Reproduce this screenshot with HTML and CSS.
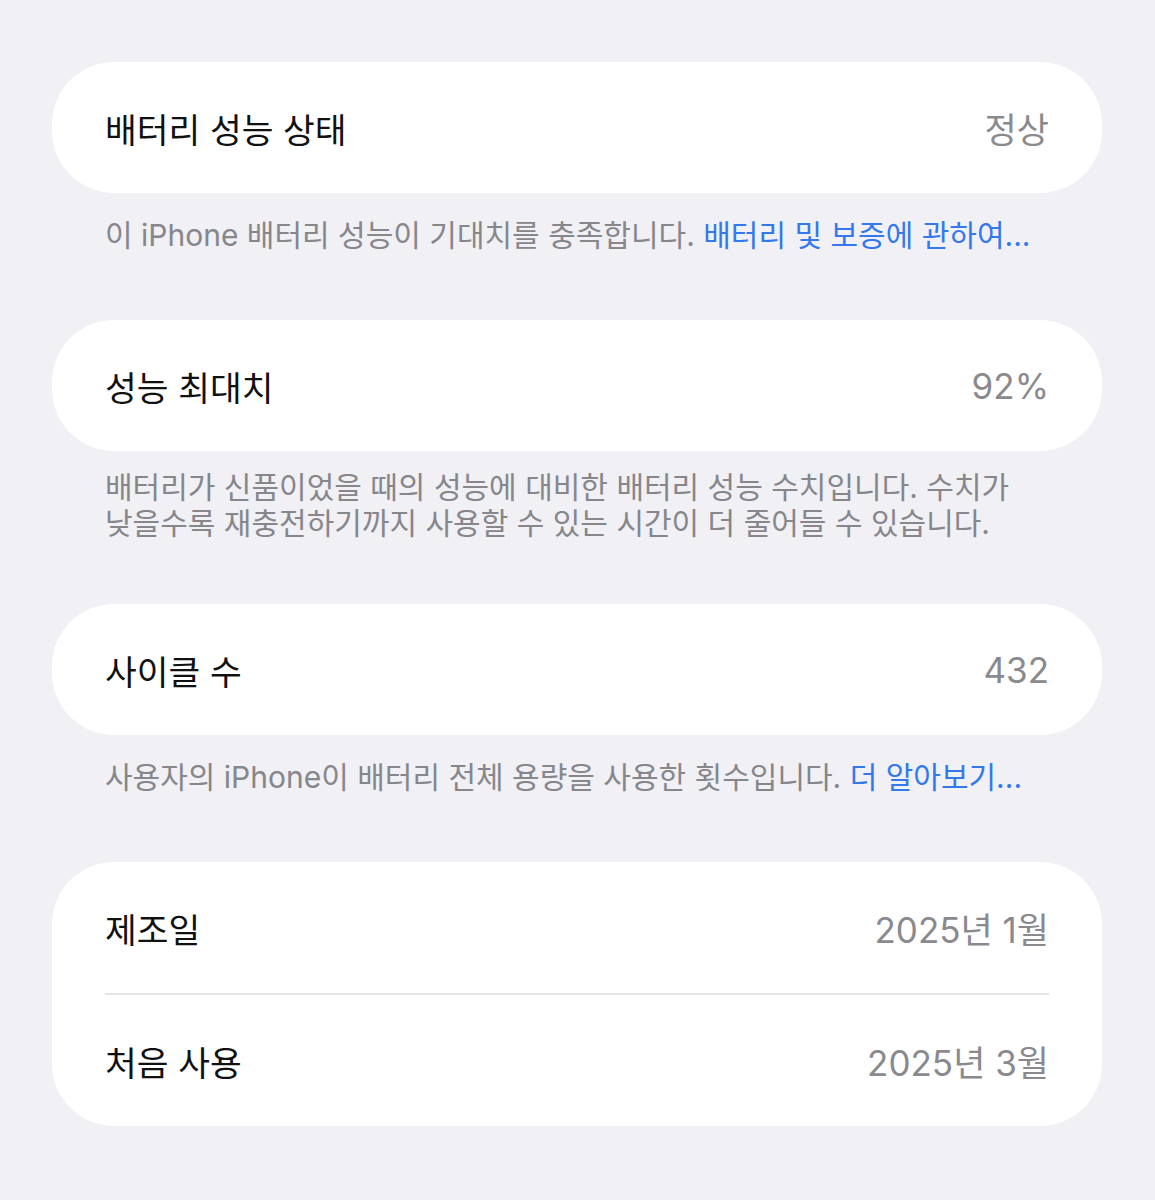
FILE: index.html
```html
<!DOCTYPE html>
<html lang="ko">
<head>
    <meta charset="UTF-8">
    <meta name="viewport" content="width=device-width, initial-scale=1.0">
    <title>배터리 성능 상태</title>
    <link rel="stylesheet" href="styles.css">
</head>
<body>
    <div class="settings">
        <div class="group">
            <div class="row">
                <span class="label">배터리 성능 상태</span>
                <span class="value">정상</span>
            </div>
        </div>
        <div class="footnote">이 iPhone 배터리 성능이 기대치를 충족합니다. <a class="link" href="#">배터리 및 보증에 관하여...</a></div>

        <div class="group">
            <div class="row">
                <span class="label">성능 최대치</span>
                <span class="value">92%</span>
            </div>
        </div>
        <div class="footnote multi">배터리가 신품이었을 때의 성능에 대비한 배터리 성능 수치입니다. 수치가 낮을수록 재충전하기까지 사용할 수 있는 시간이 더 줄어들 수 있습니다.</div>

        <div class="group">
            <div class="row">
                <span class="label">사이클 수</span>
                <span class="value">432</span>
            </div>
        </div>
        <div class="footnote">사용자의 iPhone이 배터리 전체 용량을 사용한 횟수입니다. <a class="link" href="#">더 알아보기...</a></div>

        <div class="group">
            <div class="row">
                <span class="label">제조일</span>
                <span class="value">2025년 1월</span>
            </div>
            <div class="divider"></div>
            <div class="row">
                <span class="label">처음 사용</span>
                <span class="value">2025년 3월</span>
            </div>
        </div>
    </div>
</body>
</html>
```

FILE: styles.css
```css
body {
    margin: 0;
    padding: 0;
    background-color: #f0f0f5; /* iOS 그룹 배경 */
    font-family: Inter, 'Noto Sans CJK KR', sans-serif;
}

.settings {
    padding: 62px 53px 0 52px;
}

.group {
    background-color: #fff;
    border-radius: 62px;
    padding: 0 53px;
}

.row {
    height: 131px;
    display: flex;
    align-items: center;
    justify-content: space-between;
}

.label {
    font-size: 34.5px;
    color: #111;
}

.value {
    font-size: 35px;
    color: #8a8a8e;
}

.divider {
    height: 2px;
    background-color: #e4e4e9;
}

.footnote {
    padding: 24px 53px 67px;
    font-size: 30px;
    line-height: 36px;
    color: #86868b;
    word-break: keep-all;
}

.footnote.multi {
    padding-top: 18px;
    padding-bottom: 63px;
}

.link {
    color: #3479ec;
    text-decoration: none;
}
```
